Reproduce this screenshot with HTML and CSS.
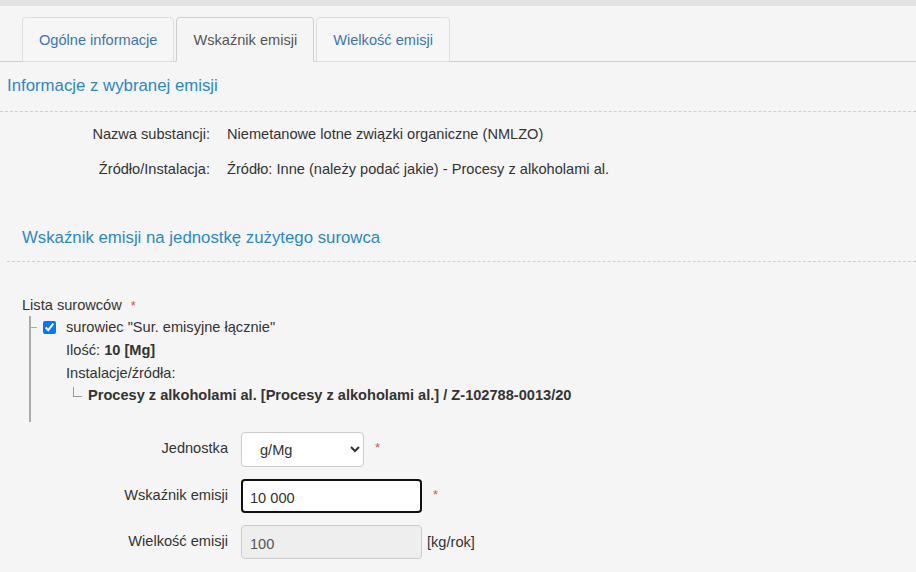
FILE: index.html
```
<!DOCTYPE html>
<html lang="pl">
<head>
    <meta charset="UTF-8">
    <meta name="viewport" content="width=device-width, initial-scale=1.0">
    <title>Wskaźnik emisji</title>
    <link rel="stylesheet" href="styles.css">
</head>
<body>
    <div class="topbar"></div>

    <!-- zakładki -->
    <ul class="tabs">
        <li class="tab">Ogólne informacje</li>
        <li class="tab active">Wskaźnik emisji</li>
        <li class="tab">Wielkość emisji</li>
    </ul>

    <div class="section">
        <h3 class="section-title">Informacje z wybranej emisji</h3>
        <div class="info">
            <div class="info-label">Nazwa substancji:</div>
            <div class="info-value">Niemetanowe lotne związki organiczne (NMLZO)</div>
            <div class="info-label">Źródło/Instalacja:</div>
            <div class="info-value">Źródło: Inne (należy podać jakie) - Procesy z alkoholami al.</div>
        </div>
    </div>

    <div class="panel">
        <h3 class="section-title sub">Wskaźnik emisji na jednostkę zużytego surowca</h3>

        <div class="materials">
            <div class="materials-label">Lista surowców <span class="req">*</span></div>
            <div class="tree">
                <div class="tree-item">
                    <span class="tick"></span>
                    <input type="checkbox" class="check" checked>
                    <span>surowiec "Sur. emisyjne łącznie"</span>
                </div>
                <div class="tree-line">Ilość: <b>10 [Mg]</b></div>
                <div class="tree-line">Instalacje/źródła:</div>
                <div class="tree-line source"><span class="corner"></span><b>Procesy z alkoholami al. [Procesy z alkoholami al.] / Z-102788-0013/20</b></div>
            </div>
        </div>
    </div>

    <div class="form">
        <label class="form-label">Jednostka</label>
        <div class="form-field">
            <select class="control select">
                <option>g/Mg</option>
            </select>
            <span class="req">*</span>
        </div>

        <label class="form-label">Wskaźnik emisji</label>
        <div class="form-field">
            <input type="text" class="control input focused" value="10 000">
            <span class="req">*</span>
        </div>

        <label class="form-label">Wielkość emisji</label>
        <div class="form-field">
            <input type="text" class="control input" value="100" disabled>
            <span class="unit">[kg/rok]</span>
        </div>
    </div>
</body>
</html>
```

FILE: styles.css
```
* {
    margin: 0;
    padding: 0;
    box-sizing: border-box;
    font-family: 'Liberation Sans', Arial, sans-serif;
}

body {
    background: #f5f5f5;
    color: #333;
    font-size: 14.6px;
    width: 916px;
    height: 572px;
    overflow: hidden;
}

.topbar {
    height: 6px;
    background: #e3e2e3;
}

/* zakładki */
.tabs {
    list-style: none;
    display: flex;
    gap: 2px;
    padding: 11px 0 0 22px;
    border-bottom: 1px solid #cfcfcf;
}

.tab {
    height: 45px;
    margin-bottom: -1px;
    padding: 0 16px;
    line-height: 44px;
    color: #3a76b4;
    background: #f6f6f6;
    border: 1px solid #dedede;
    border-radius: 4px 4px 0 0;
}

.tab.active {
    color: #555;
    background: #f5f5f5;
    border-color: #cfcfcf;
    border-bottom-color: #f5f5f5;
}

.section-title {
    font-size: 16.8px;
    font-weight: normal;
    line-height: 24px;
    color: #2a89c5;
    padding: 12px 0 13px 7px;
    border-bottom: 1px dashed #cfcfcf;
}

.info {
    display: grid;
    grid-template-columns: 210px auto;
    column-gap: 17px;
    row-gap: 15px;
    padding-top: 12px;
    line-height: 20px;
}

.info-label {
    text-align: right;
}

.panel {
    margin: 47px 0 0 7px;
}

.section-title.sub {
    padding: 0 0 11px 15px;
}

.materials {
    padding: 33px 0 0 15px;
}

.materials-label {
    line-height: 20px;
}

.req {
    color: #d9534f;
    font-size: 13px;
    margin-left: 5px;
}

.tree {
    margin: 0 0 0 7px;
    padding-bottom: 16px;
    border-left: 2px solid #aaa;
    line-height: 23px;
}

.tree-item {
    display: flex;
    align-items: center;
}

.tick {
    width: 6px;
    height: 1px;
    background: #aaa;
}

.check {
    width: 13px;
    height: 13px;
    margin: 0 10px 0 6px;
}

.tree-line {
    padding-left: 35px;
}

.tree-line.source {
    padding-left: 42px;
    line-height: 21px;
    display: flex;
    align-items: center;
}

.corner {
    width: 9px;
    height: 10px;
    margin: -8px 6px 0 0;
    border-left: 1px solid #999;
    border-bottom: 1px solid #999;
}

/* formularz */
.form {
    display: grid;
    grid-template-columns: 228px auto;
    column-gap: 13px;
    row-gap: 12px;
    margin-top: 10px;
    align-items: center;
}

.form-label {
    text-align: right;
    margin-top: -3px;
}

.form-field {
    display: flex;
    align-items: center;
}

.control {
    height: 35px;
    font-size: 14.6px;
    color: #333;
    background: #fff;
    border: 1px solid #ccc;
    border-radius: 4px;
}

.select {
    width: 123px;
    padding-left: 14px;
}

.select + .req {
    margin-left: 11px;
    margin-top: -4px;
}

.input {
    width: 181px;
    height: 34px;
    padding: 3px 8px 0;
}

.input.focused {
    border: 2px solid #111;
    outline: none;
    padding-left: 7px;
}

.input.focused + .req {
    margin-left: 11px;
    margin-top: -4px;
}

.input:disabled {
    background: #eee;
    color: #555;
}

.unit {
    margin-left: 5px;
}
```
